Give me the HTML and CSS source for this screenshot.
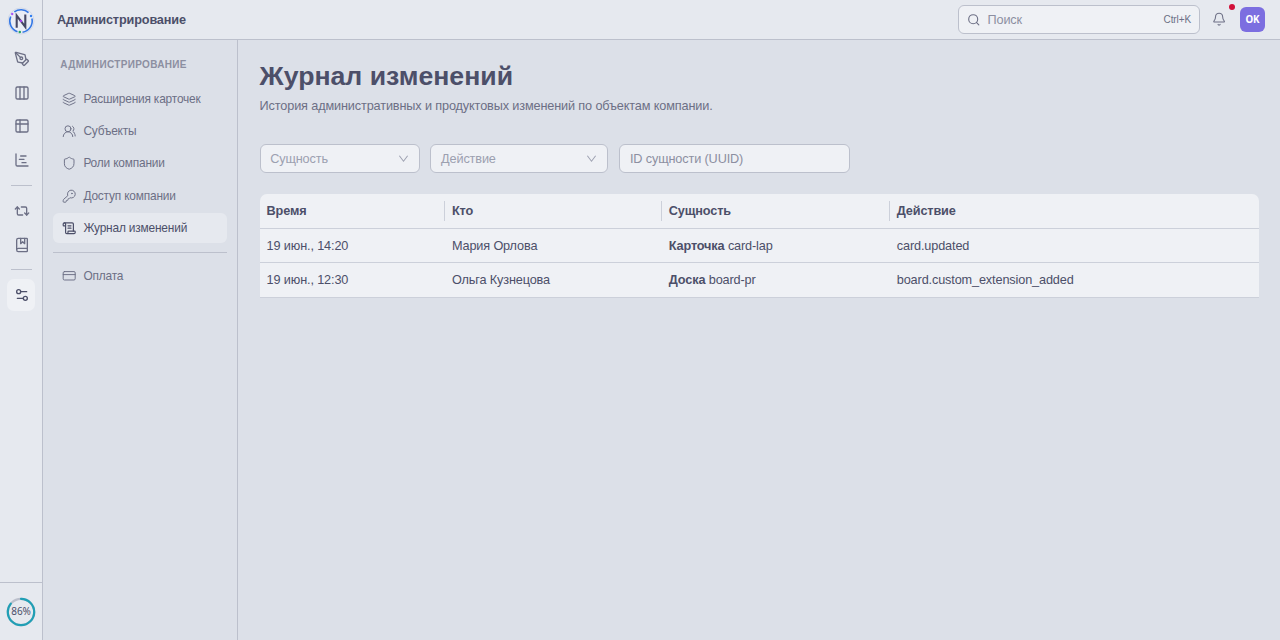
FILE: index.html
```html
<!DOCTYPE html>
<html lang="ru">
<head>
<meta charset="utf-8">
<title>Журнал изменений</title>
<link rel="stylesheet" href="styles.css">
</head>
<body>
<div class="app">
  <nav class="rail">
    <svg class="logo" viewBox="0 0 28 28"><circle class="logo-bg" cx="14" cy="14" r="13"/><path class="logo-ring" d="M7.300 4.900A11.300 11.300 0 0 1 21.500 5.600M24.900 11.500A11.300 11.300 0 0 1 15.500 25.200M10.500 24.700A11.300 11.300 0 0 1 3.700 9.500"/><path class="logo-n" d="M9.700 20.800V8.500l8.600 11.300V7.500"/><path class="logo-cut" d="M12 16l5-4"/><circle fill="#a044e8" cx="14" cy="14" r="1.300"/><circle fill="#a855f7" cx="5.200" cy="7" r="1.200"/><circle fill="#2f7df0" cx="24" cy="9" r="1.200"/><circle fill="#27a567" cx="12.800" cy="25" r="1.300"/></svg>
    <a class="rail-item"><svg class="icon" viewBox="0 0 24 24"><path d="M15.707 21.293a1 1 0 0 1-1.414 0l-1.586-1.586a1 1 0 0 1 0-1.414l5.586-5.586a1 1 0 0 1 1.414 0l1.586 1.586a1 1 0 0 1 0 1.414z"/><path d="m18 13-1.375-6.874a1 1 0 0 0-.746-.776L3.235 2.028a1 1 0 0 0-1.207 1.207L5.35 15.879a1 1 0 0 0 .776.746L13 18"/><path d="m2.3 2.3 7.286 7.286"/><circle cx="11" cy="11" r="2"/></svg></a>
    <a class="rail-item"><svg class="icon" viewBox="0 0 24 24"><rect width="18" height="18" x="3" y="3" rx="2"/><path d="M9 3v18M15 3v18"/></svg></a>
    <a class="rail-item"><svg class="icon" viewBox="0 0 24 24"><rect width="18" height="18" x="3" y="3" rx="2"/><path d="M3 9h18M9 3v18"/></svg></a>
    <a class="rail-item"><svg class="icon" viewBox="0 0 24 24"><path d="M10 6h8M12 16h6M3 3v16a2 2 0 0 0 2 2h16M8 11h7"/></svg></a>
    <i class="rail-line"></i>
    <a class="rail-item"><svg class="icon" viewBox="0 0 24 24"><path d="m2 9 3-3 3 3"/><path d="M13 18H7a2 2 0 0 1-2-2V6"/><path d="m22 15-3 3-3-3"/><path d="M11 6h6a2 2 0 0 1 2 2v10"/></svg></a>
    <a class="rail-item"><svg class="icon" viewBox="0 0 24 24"><path d="M10 2v8l3-3 3 3V2"/><path d="M4 19.5v-15A2.5 2.5 0 0 1 6.5 2H19a1 1 0 0 1 1 1v18a1 1 0 0 1-1 1H6.500a1 1 0 0 1 0-5H20"/></svg></a>
    <i class="rail-line"></i>
    <a class="rail-item current"><svg class="icon" viewBox="0 0 24 24"><path d="M14 17H5M19 7h-9"/><circle cx="17" cy="17" r="3"/><circle cx="7" cy="7" r="3"/></svg></a>
    <div class="rail-foot"><svg class="progress" viewBox="0 0 30 30"><circle class="track" cx="15" cy="15" r="13.2"/><circle class="value" cx="15" cy="15" r="13.2" pathLength="100"/><text x="15" y="18.400">86%</text></svg></div>
  </nav>
  <div class="main">
    <header class="topbar">
      <div class="topbar-title">Администрирование</div>
      <div class="search"><svg class="icon search-icon" viewBox="0 0 24 24"><circle cx="11" cy="11" r="8"/><path d="m21 21-4.300-4.300"/></svg><span class="search-text">Поиск</span><span class="keys">Ctrl+K</span></div>
      <div class="bell"><svg class="icon" viewBox="0 0 24 24"><path d="M10.268 21a2 2 0 0 0 3.464 0"/><path d="M3.262 15.326A1 1 0 0 0 4 17h16a1 1 0 0 0 .74-1.673C19.410 13.956 18 12.499 18 8A6 6 0 0 0 6 8c0 4.499-1.411 5.956-2.738 7.326"/></svg><i class="dot"></i></div>
      <div class="avatar">OK</div>
    </header>
    <div class="body">
      <aside class="side">
        <div class="side-title">Администрирование</div>
        <a class="side-item"><svg class="icon thin" viewBox="0 0 24 24"><path d="M12.830 2.180a2 2 0 0 0-1.660 0L2.600 6.080a1 1 0 0 0 0 1.830l8.580 3.910a2 2 0 0 0 1.660 0l8.580-3.900a1 1 0 0 0 0-1.830z"/><path d="M2 12a1 1 0 0 0 .58.910l8.600 3.910a2 2 0 0 0 1.650 0l8.580-3.900A1 1 0 0 0 22 12"/><path d="M2 17a1 1 0 0 0 .58.910l8.600 3.910a2 2 0 0 0 1.650 0l8.580-3.900A1 1 0 0 0 22 17"/></svg>Расширения карточек</a>
        <a class="side-item"><svg class="icon thin" viewBox="0 0 24 24"><path d="M18 21a8 8 0 0 0-16 0"/><circle cx="10" cy="8" r="5"/><path d="M22 20c0-3.370-2-6.500-4-8a5 5 0 0 0-.450-8.300"/></svg>Субъекты</a>
        <a class="side-item"><svg class="icon thin" viewBox="0 0 24 24"><path d="M20 13c0 5-3.500 7.500-7.660 8.950a1 1 0 0 1-.670-.010C7.500 20.500 4 18 4 13V6a1 1 0 0 1 1-1c2 0 4.500-1.200 6.240-2.720a1.170 1.170 0 0 1 1.520 0C14.510 3.810 17 5 19 5a1 1 0 0 1 1 1z"/></svg>Роли компании</a>
        <a class="side-item"><svg class="icon thin" viewBox="0 0 24 24"><path d="M2.586 17.414A2 2 0 0 0 2 18.828V21a1 1 0 0 0 1 1h3a1 1 0 0 0 1-1v-1a1 1 0 0 1 1-1h1a1 1 0 0 0 1-1v-1a1 1 0 0 1 1-1h.172a2 2 0 0 0 1.414-.586l.814-.814a6.500 6.500 0 1 0-4-4z"/><circle cx="16.500" cy="7.500" r=".5" fill="currentColor"/></svg>Доступ компании</a>
        <a class="side-item selected"><svg class="icon" viewBox="0 0 24 24"><path d="M15 12h-5M15 8h-5M19 17V5a2 2 0 0 0-2-2H4"/><path d="M8 21h12a2 2 0 0 0 2-2v-1a1 1 0 0 0-1-1H11a1 1 0 0 0-1 1v1a2 2 0 1 1-4 0V5a2 2 0 1 0-4 0v2a1 1 0 0 0 1 1h3"/></svg>Журнал изменений</a>
        <i class="side-line"></i>
        <a class="side-item"><svg class="icon thin" viewBox="0 0 24 24"><rect width="20" height="14" x="2" y="6" rx="2"/><path d="M2 11h20"/></svg>Оплата</a>
      </aside>
      <main class="content">
        <h1 class="heading">Журнал изменений</h1>
        <p class="lead">История административных и продуктовых изменений по объектам компании.</p>
        <div class="filters">
          <div class="field entity">Сущность<svg class="chevron" viewBox="0 0 12 12"><path d="M1.500 3l4.500 6 4.500-6"/></svg></div>
          <div class="field action">Действие<svg class="chevron" viewBox="0 0 12 12"><path d="M1.500 3l4.500 6 4.500-6"/></svg></div>
          <div class="field uuid">ID сущности (UUID)</div>
        </div>
        <div class="table">
          <div class="row head"><span>Время</span><span>Кто</span><span>Сущность</span><span>Действие</span></div>
          <div class="row"><span>19 июн., 14:20</span><span>Мария Орлова</span><span><b>Карточка</b> card-lap</span><span>card.updated</span></div>
          <div class="row"><span>19 июн., 12:30</span><span>Ольга Кузнецова</span><span><b>Доска</b> board-pr</span><span>board.custom_extension_added</span></div>
        </div>
      </main>
    </div>
  </div>
</div>
</body>
</html>
```
FILE: styles.css
```css
* { box-sizing: border-box; }
body { margin: 0; background: #dce0e8; color: #4c4f69; font: 12.7px/20px "Liberation Sans", Arial, sans-serif; letter-spacing: -.135px; }
.app { display: flex; height: 640px; overflow: hidden; }
.icon { width: 16px; height: 16px; flex: none; fill: none; stroke: currentColor; stroke-width: 2; stroke-linecap: round; stroke-linejoin: round; }
.rail { width: 43px; flex: none; display: flex; flex-direction: column; align-items: center; padding-top: 7.4px; background: #e6e9ef; border-right: 1px solid #bcc0cc; color: #6c6f85; }
.logo { width: 28px; height: 28px; margin-bottom: 7.4px; fill: none; }
.logo-bg { fill: #e9edf5; stroke: #c5cfe2; stroke-width: .7; }
.logo-ring { stroke: #3478e5; stroke-width: 1.6; }
.logo-n { stroke: #454763; stroke-width: 2.1; }
.logo-cut { stroke: #e9edf5; stroke-width: .8; }
.rail-item { width: 28.5px; height: 32px; flex: none; margin-bottom: 1.8px; padding-left: 1px; display: flex; align-items: center; justify-content: center; border-radius: 7px; }
.rail-line { width: 21px; height: 1px; flex: none; margin: 7px 0 8.8px; background: #bcc0cc; }
.current { background: #eff1f5; color: #4c4f69; }
.rail-foot { width: 42px; height: 58px; margin-top: auto; border-top: 1px solid #bcc0cc; display: flex; align-items: center; justify-content: center; }
.progress { width: 30px; height: 30px; fill: none; }
.track { stroke: #bcc0cc; stroke-width: 2.2; }
.value { stroke: #209fb5; stroke-width: 2.2; stroke-linecap: round; stroke-dasharray: 86 100; transform: rotate(-90deg); transform-origin: 15px 15px; }
.progress text { fill: #4c4f69; font-family: "Noto Sans", sans-serif; font-size: 10px; letter-spacing: -.1px; text-anchor: middle; }
.main { flex: 1; display: flex; flex-direction: column; min-width: 0; }
.topbar { height: 40px; flex: none; display: flex; align-items: center; padding: 0 15px 0 14px; background: #e6e9ef; border-bottom: 1px solid #bcc0cc; }
.topbar-title { flex: 1; font-weight: 700; letter-spacing: -.15px; }
.search { width: 242px; height: 29px; display: flex; align-items: center; padding: 0 8px; background: #eff1f5; border: 1px solid #bcc0cc; border-radius: 6px; color: #8c8fa1; }
.search-icon { width: 13.5px; height: 13.5px; margin-right: 7px; color: #6c6f85; }
.search-text { flex: 1; }
.keys { font-size: 10px; letter-spacing: -.1px; color: #6c6f85; }
.bell { position: relative; width: 14.2px; height: 14.2px; margin-left: 12.3px; color: #6c6f85; }
.bell .icon { display: block; width: 14.2px; height: 14.2px; stroke-width: 1.8; }
.dot { position: absolute; left: 16.5px; top: -8.3px; width: 6px; height: 6px; border-radius: 50%; background: #d20f39; }
.avatar { width: 25px; height: 25px; margin-left: 13.5px; border-radius: 6px; background: #7c6ee0; color: #fff; font: 700 9.8px/25px "Noto Sans", sans-serif; letter-spacing: -.2px; text-align: center; }
.body { flex: 1; display: flex; min-height: 0; }
.side { width: 195px; flex: none; display: flex; flex-direction: column; gap: 2px; padding: 16px 10px; border-right: 1px solid #bcc0cc; color: #6c6f85; }
.side-title { height: 18px; margin-bottom: 7px; padding-left: 7.3px; font-size: 10px; line-height: 18px; font-weight: 700; letter-spacing: .33px; text-transform: uppercase; white-space: nowrap; color: #8c8fa1; }
.side-item { height: 30.4px; flex: none; display: flex; align-items: center; gap: 7px; padding: 1px 0 0 9px; border-radius: 6px; font-size: 11.9px; letter-spacing: -.18px; white-space: nowrap; }
.side-item .icon { width: 14.4px; height: 14.4px; }
.side-item .thin { stroke-width: 1.6; }
.selected { background: #e6e9ef; color: #4c4f69; }
.side-line { height: 1px; margin: 7px 0 5px; background: #bcc0cc; }
.content { flex: 1; min-width: 0; padding: 20px 21px 0 21.6px; }
.heading { margin: 0; font-size: 26.667px; line-height: 33px; font-weight: 700; letter-spacing: 0; }
.lead { margin: 3px 0 28px; color: #6c6f85; }
.filters { display: flex; gap: 10.9px; }
.field { height: 29px; display: flex; align-items: center; justify-content: space-between; padding: 0 10px 0 9.6px; background: #eff1f5; border: 1px solid #bcc0cc; border-radius: 6px; color: #9ca0b0; }
.entity { width: 160px; }
.action { width: 178px; }
.uuid { width: 231px; color: #8c8fa1; }
.chevron { width: 11px; height: 11px; fill: none; stroke: #9ca0b0; stroke-width: 1.1; }
.table { margin-top: 21px; background: #eff1f5; border-radius: 7px 7px 0 0; overflow: hidden; }
.row { height: 34.6px; display: grid; grid-template-columns: 185.3px 216.9px 228px 1fr; align-items: center; border-bottom: 1px solid #ccd0da; }
.row span { padding-left: 7px; white-space: nowrap; }
.row:not(.head) { padding-top: 1px; }
.head { font-weight: 700; }
.head span { line-height: 20px; }
.head span:not(:last-child) { border-right: 1px solid #ccd0da; }
```
